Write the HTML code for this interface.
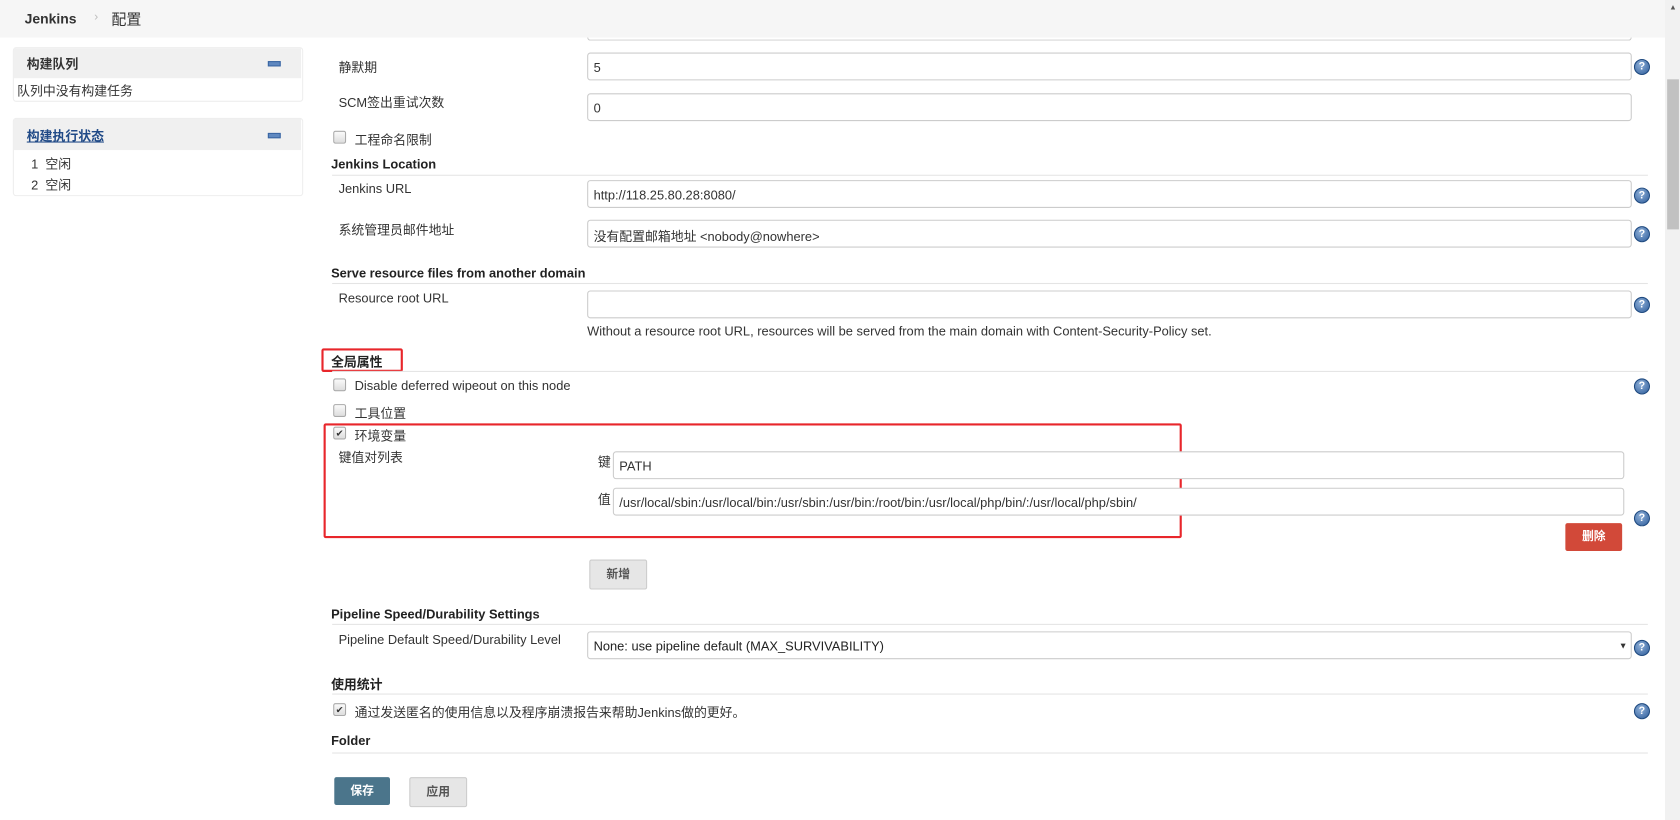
<!DOCTYPE html>
<html><head><meta charset="utf-8">
<style>
html,body{margin:0;padding:0;width:1680px;height:820px;overflow:hidden;background:#fff}
#w{position:absolute;left:0;top:0;width:1568px;height:765px;transform:scale(1.07143,1.0719);transform-origin:0 0;font-family:"Liberation Sans","Noto Sans CJK SC",sans-serif;font-size:12px;color:#333}
.a{position:absolute;white-space:nowrap}
.lbl{position:absolute;left:316px;white-space:nowrap;color:#333}
.in{position:absolute;left:548px;width:973px;height:24px;border:1px solid #ccc;border-radius:3px;background:#fff;box-sizing:content-box}
.in span{position:absolute;left:5px;top:6px}
.hp{position:absolute;left:1525px;width:13px;height:13px;border-radius:50%;background:radial-gradient(circle at 40% 35%,#8fb0d8,#2d5c9a);border:1px solid #1f4a80;color:#fff;font-size:10px;font-weight:bold;text-align:center;line-height:13px}
.sh{position:absolute;left:309px;font-weight:bold;color:#222}
.ln{position:absolute;left:310px;width:1228px;height:1px;background:#e4e4e4}
.cb{position:absolute;left:311px;width:10px;height:10px;border:1px solid #aaa;border-radius:2px;background:linear-gradient(#fafafa,#ddd)}
.btn{position:absolute;height:26px;border-radius:2px;text-align:center;line-height:26px;font-size:11px;font-weight:bold}
</style></head><body><div id="w">
<div class="a" style="left:0;top:0;width:1568px;height:35px;background:#f6f6f6"></div>
<div class="a" style="left:23px;top:10px;font-size:13px;font-weight:bold;color:#333">Jenkins</div>
<div class="a" style="left:88px;top:10px;font-size:11px;color:#bbb">›</div>
<div class="a" style="left:104px;top:8px;font-size:14px;color:#333">配置</div>
<!-- sidebar -->
<div class="a" style="left:12px;top:44px;width:269px;height:49px;border:1px solid #eee;border-radius:3px;background:#fff"></div>
<div class="a" style="left:13px;top:45px;width:268px;height:28px;background:#f0f0f0"></div>
<div class="a" style="left:25px;top:51px;font-weight:bold">构建队列</div>
<div class="a" style="left:250px;top:57px;width:10px;height:3px;background:#5f88c0;border:1px solid #3a66a3"></div>
<div class="a" style="left:16px;top:76px">队列中没有构建任务</div>
<div class="a" style="left:12px;top:110px;width:269px;height:71px;border:1px solid #eee;border-radius:3px;background:#fff"></div>
<div class="a" style="left:13px;top:111px;width:268px;height:29px;background:#f0f0f0"></div>
<div class="a" style="left:25px;top:118px;font-weight:bold;color:#204a87;text-decoration:underline">构建执行状态</div>
<div class="a" style="left:250px;top:124px;width:10px;height:3px;background:#5f88c0;border:1px solid #3a66a3"></div>
<div class="a" style="left:29px;top:144px">1&nbsp; 空闲</div>
<div class="a" style="left:29px;top:164px">2&nbsp; 空闲</div>
<!-- scrollbar -->
<div class="a" style="left:1554px;top:0;width:14px;height:765px;background:#f1f1f1"></div>
<div class="a" style="left:1556px;top:74px;width:11px;height:140px;background:#c1c1c1"></div>
<div class="a" style="left:1558px;top:4px;font-size:7px;color:#555">▲</div>
<!-- main -->
<div class="in" style="top:12px;height:25px;border-top:none"></div>
<div class="a" style="left:540px;top:0;width:990px;height:35px;background:#f6f6f6"></div>
<div class="lbl" style="top:54px">静默期</div>
<div class="in" style="top:49px"><span>5</span></div><div class="hp" style="top:55px">?</div>
<div class="lbl" style="top:87px">SCM签出重试次数</div>
<div class="in" style="top:87px"><span>0</span></div>
<div class="cb" style="top:122px"></div><div class="a" style="left:331px;top:122px">工程命名限制</div>
<div class="sh" style="top:146px">Jenkins Location</div><div class="ln" style="top:163px"></div>
<div class="lbl" style="top:169px">Jenkins URL</div>
<div class="in" style="top:168px"><span>http://118.25.80.28:8080/</span></div><div class="hp" style="top:175px">?</div>
<div class="lbl" style="top:206px">系统管理员邮件地址</div>
<div class="in" style="top:205px"><span>没有配置邮箱地址 &lt;nobody@nowhere&gt;</span></div><div class="hp" style="top:211px">?</div>
<div class="sh" style="top:248px">Serve resource files from another domain</div><div class="ln" style="top:264px"></div>
<div class="lbl" style="top:271px">Resource root URL</div>
<div class="in" style="top:271px"></div><div class="hp" style="top:277px">?</div>
<div class="a" style="left:548px;top:302px">Without a resource root URL, resources will be served from the main domain with Content-Security-Policy set.</div>
<div class="sh" style="top:329px">全局属性</div>
<div class="a" style="left:300px;top:325px;width:72px;height:18px;border:2px solid #e8262b;border-radius:2px"></div>
<div class="ln" style="top:346px"></div>
<div class="cb" style="top:353px"></div><div class="a" style="left:331px;top:353px">Disable deferred wipeout on this node</div><div class="hp" style="top:353px">?</div>
<div class="cb" style="top:377px"></div><div class="a" style="left:331px;top:377px">工具位置</div>
<div class="cb" style="top:398px;font-size:9px;line-height:10px;text-align:center">✔</div><div class="a" style="left:331px;top:398px">环境变量</div>
<div class="a" style="left:302px;top:395px;width:797px;height:103px;border:2px solid #e8262b;border-radius:2px"></div>
<div class="lbl" style="top:418px">键值对列表</div>
<div class="a" style="left:558px;top:422px">键</div>
<div class="in" style="left:572px;width:942px;top:421px"><span>PATH</span></div>
<div class="a" style="left:558px;top:457px">值</div>
<div class="in" style="left:572px;width:942px;top:455px"><span>/usr/local/sbin:/usr/local/bin:/usr/sbin:/usr/bin:/root/bin:/usr/local/php/bin/:/usr/local/php/sbin/</span></div>
<div class="hp" style="top:476px">?</div>
<div class="btn" style="left:1461px;top:488px;width:53px;background:#d24939;color:#fff">删除</div>
<div class="btn" style="left:550px;top:522px;width:52px;background:#e6e6e6;border:1px solid #ccc;color:#555">新增</div>
<div class="sh" style="top:566px">Pipeline Speed/Durability Settings</div><div class="ln" style="top:582px"></div>
<div class="lbl" style="top:590px">Pipeline Default Speed/Durability Level</div>
<div class="in" style="top:589px"><span style="color:#222">None: use pipeline default (MAX_SURVIVABILITY)</span><span style="left:962px;font-size:8px;top:8px">▼</span></div><div class="hp" style="top:597px">?</div>
<div class="sh" style="top:630px">使用统计</div><div class="ln" style="top:647px"></div>
<div class="cb" style="top:656px;font-size:9px;line-height:10px;text-align:center">✔</div><div class="a" style="left:331px;top:656px">通过发送匿名的使用信息以及程序崩溃报告来帮助Jenkins做的更好。</div><div class="hp" style="top:656px">?</div>
<div class="sh" style="top:684px">Folder</div><div class="ln" style="top:702px"></div>
<div class="btn" style="left:312px;top:725px;width:52px;background:#4b758b;color:#fff">保存</div>
<div class="btn" style="left:382px;top:725px;width:52px;background:#e6e6e6;border:1px solid #ccc;color:#555">应用</div>
</div></body></html>
